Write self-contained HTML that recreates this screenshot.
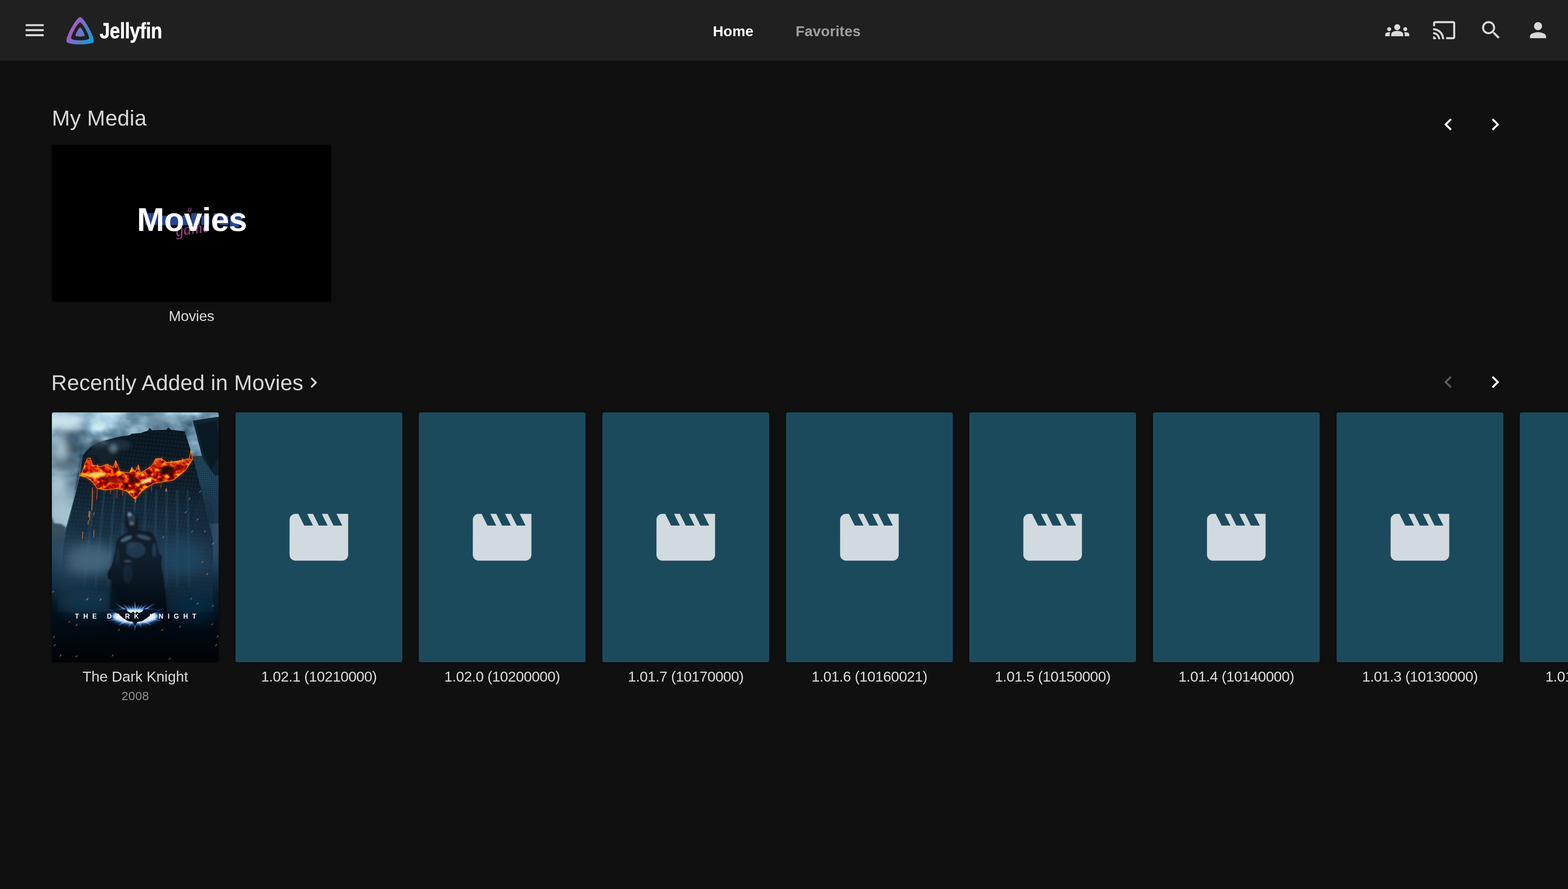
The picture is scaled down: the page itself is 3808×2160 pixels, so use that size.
<!DOCTYPE html>
<html lang="en">
<head>
<meta charset="utf-8">
<title>Jellyfin</title>
<style>
*{box-sizing:border-box}
html,body{margin:0;padding:0;width:3808px;height:2160px;overflow:hidden;background:#101010}
body{font-family:"Liberation Sans",sans-serif;color:#dcdcdc;position:relative}
main,.hc{opacity:.999}
.hc{position:absolute;left:0;top:0;width:3808px;height:147px;will-change:transform}
.abs{position:absolute;white-space:nowrap;line-height:1}
header{position:absolute;left:0;top:0;width:3808px;height:147px;background:#202020}
.ic{position:absolute;width:58.5px;height:58.5px;fill:#dadada}
.tab{font-weight:700;font-size:35.5px}
h2{margin:0;font-weight:400;font-size:52.6px;color:#d9d9d9;letter-spacing:.3px}
.card{position:absolute;top:1002px;width:405px;height:607px;border-radius:4.5px;background:#1d4b5e;overflow:hidden;box-shadow:0 0 6px rgba(0,0,0,.5)}
.card svg.mv{position:absolute;left:117.3px;top:217.5px;width:170.8px;height:170.8px;fill:#d2dbdf}
.ct{font-size:35.5px;color:#dcdcdc;text-align:center;width:405px;top:1626.8px;letter-spacing:-.3px}
.ct.num{letter-spacing:-.53px}
.ct.ttl{letter-spacing:0}
.ct.sec{font-size:29.5px;color:#919191;top:1676px;letter-spacing:.4px}
.nav{fill:#fff}
.nav.dis{fill:#5c5c5c}
.lib{position:absolute;width:678px;height:381px;background:#000;border-radius:4.5px;overflow:hidden;box-shadow:0 0 6px rgba(0,0,0,.5)}
.libbg{position:absolute;left:0;top:0}
.libt{position:absolute;left:0;top:0;width:100%;height:100%;display:flex;align-items:center;justify-content:center;font-weight:700;font-size:80.2px;color:#fff;letter-spacing:-.8px;padding-bottom:17.6px;padding-left:2px}
</style>
</head>
<body>
<header>
<div class="hc">
  <svg class="ic" style="left:55px;top:44px" viewBox="0 0 24 24"><path d="M3 18h18v-2H3v2zm0-5h18v-2H3v2zm0-7v2h18V6H3z"/></svg>
  <svg class="abs" style="left:158.1px;top:37.9px;width:73.2px;height:73.2px" viewBox="0 0 512 512"><defs><linearGradient id="jg" gradientUnits="userSpaceOnUse" x1="110.25" y1="213.3" x2="496.14" y2="436.09"><stop offset="0" stop-color="#aa5cc3"/><stop offset="1" stop-color="#00a4dc"/></linearGradient></defs><path d="M256 201.62c-20.44 0-86.23 119.29-76.2 139.43 10.01 20.1 142.48 19.88 152.4 0 9.92-19.88-55.75-139.42-76.2-139.43z" fill="url(#jg)"/><path d="M256 23.3c-61.56 0-259.82 359.43-229.59 420.13 30.23 60.7 429.34 60 459.24 0C515.55 382.73 317.62 23.3 256 23.3zm150.51 367.5c-19.59 39.33-281.08 39.77-300.9 0C85.8 351.03 215.69 115.48 256 115.48c40.31 0 170.1 235.94 150.51 275.32z" fill="url(#jg)"/></svg>
  <div class="abs" id="logo" style="left:242px;top:48.3px;font-size:53.5px;font-weight:700;color:#fff;letter-spacing:-0.5px;-webkit-text-stroke:0.7px #fff;transform:scaleX(0.84);transform-origin:0 0">Jellyfin</div>
  <div class="abs tab" id="t1" style="left:1731.2px;top:58.7px;color:#fff">Home</div>
  <div class="abs tab" id="t2" style="left:1932.3px;top:58.7px;color:#a0a0a0">Favorites</div>
  <svg class="ic" style="left:3364px;top:44px" viewBox="0 0 24 24"><path d="M12 12.75c1.63 0 3.07.39 4.24.9 1.08.48 1.76 1.56 1.76 2.73V18H6v-1.61c0-1.18.68-2.26 1.76-2.73 1.17-.52 2.61-.91 4.24-.91zM4 13c1.1 0 2-.9 2-2s-.9-2-2-2-2 .9-2 2 .9 2 2 2zm1.13 1.1c-.37-.06-.74-.1-1.13-.1-.99 0-1.93.21-2.78.58C.48 14.9 0 15.62 0 16.43V18h4.5v-1.61c0-.83.23-1.61.63-2.29zM20 13c1.1 0 2-.9 2-2s-.9-2-2-2-2 .9-2 2 .9 2 2 2zm4 3.43c0-.81-.48-1.53-1.22-1.85-.85-.37-1.79-.58-2.78-.58-.39 0-.76.04-1.13.1.4.68.63 1.46.63 2.29V18H24v-1.57zM12 6c1.66 0 3 1.34 3 3s-1.34 3-3 3-3-1.34-3-3 1.34-3 3-3z"/></svg>
  <svg class="ic" style="left:3478px;top:44px" viewBox="0 0 24 24"><path d="M21 3H3c-1.1 0-2 .9-2 2v3h2V5h18v14h-7v2h7c1.1 0 2-.9 2-2V5c0-1.1-.9-2-2-2zM1 18v3h3c0-1.66-1.34-3-3-3zm0-4v2c2.76 0 5 2.24 5 5h2c0-3.87-3.13-7-7-7zm0-4v2c4.97 0 9 4.03 9 9h2c0-6.08-4.93-11-11-11z"/></svg>
  <svg class="ic" style="left:3592px;top:44px" viewBox="0 0 24 24"><path d="M15.5 14h-.79l-.28-.27C15.41 12.59 16 11.11 16 9.5 16 5.91 13.09 3 9.5 3S3 5.91 3 9.5 5.91 16 9.5 16c1.61 0 3.09-.59 4.23-1.57l.27.28v.79l5 4.99L20.49 19l-4.99-5zm-6 0C7.01 14 5 11.99 5 9.5S7.01 5 9.5 5 14 7.01 14 9.5 11.99 14 9.5 14z"/></svg>
  <svg class="ic" style="left:3706px;top:44px" viewBox="0 0 24 24"><path d="M12 12c2.21 0 4-1.79 4-4s-1.79-4-4-4-4 1.79-4 4 1.79 4 4 4zm0 2c-2.67 0-8 1.34-8 4v2h16v-2c0-2.66-5.33-4-8-4z"/></svg>
</div>
</header>
<main>
  <h2 class="abs" id="h1" style="left:126px;top:261.2px">My Media</h2>
  <svg class="ic nav" style="left:3488px;top:273px" viewBox="0 0 24 24"><path d="M15.41 7.41L14 6l-6 6 6 6 1.41-1.41L10.83 12z"/></svg>
  <svg class="ic nav" style="left:3602px;top:273px" viewBox="0 0 24 24"><path d="M10 6L8.59 7.41 13.17 12l-4.58 4.59L10 18l6-6z"/></svg>
  <div class="lib" style="left:126px;top:352px">
    <svg class="libbg" viewBox="0 0 678 381" width="678" height="381" aria-hidden="true">
      <g fill="#2a4f9e" opacity=".92">
        <rect x="226" y="166" width="30" height="29" rx="3"/><rect x="259" y="172" width="24" height="23" rx="3"/><rect x="286" y="172" width="22" height="23" rx="3"/><rect x="311" y="172" width="24" height="23" rx="3"/><rect x="338" y="166" width="22" height="29" rx="3"/><rect x="363" y="172" width="20" height="23" rx="3"/>
        <rect x="392" y="166" width="12" height="29" rx="2"/><rect x="407" y="172" width="22" height="23" rx="3"/><rect x="432" y="172" width="22" height="29" rx="3"/><rect x="440" y="164" width="22" height="31" rx="3"/>
      </g>
      <text x="329" y="163" font-family="Liberation Serif, serif" font-style="italic" font-size="22" fill="#a3438f">a</text>
      <text x="302" y="222" font-family="Liberation Serif, serif" font-style="italic" font-size="38" fill="#a3438f" transform="rotate(-8 302 222)">game</text>
    </svg>
    <span class="libt">Movies</span>
  </div>
  <div class="abs ct" style="left:126px;top:751px;width:678px">Movies</div>

  <h2 class="abs" id="h2" style="left:124.6px;top:904.2px">Recently Added in Movies</h2>
  <svg class="abs" style="left:735.5px;top:904.1px;width:51.2px;height:51.2px;fill:#d9d9d9" viewBox="0 0 24 24"><path d="M10 6L8.59 7.41 13.17 12l-4.58 4.59L10 18l6-6z"/></svg>
  <svg class="ic nav dis" style="left:3488px;top:899.1px" viewBox="0 0 24 24"><path d="M15.41 7.41L14 6l-6 6 6 6 1.41-1.41L10.83 12z"/></svg>
  <svg class="ic nav" style="left:3602px;top:899.1px" viewBox="0 0 24 24"><path d="M10 6L8.59 7.41 13.17 12l-4.58 4.59L10 18l6-6z"/></svg>

  <div class="card" id="poster" style="left:126px;background:#0b1c2a"><!--P0--><svg viewBox="0 0 404.6 607" width="405" height="607" preserveAspectRatio="none" style="position:absolute;left:0;top:0;display:block">
<defs>
<linearGradient id="pk" x1="0" y1="0" x2="0" y2="1"><stop offset="0" stop-color="#9dbfce"/><stop offset=".2" stop-color="#86abbd"/><stop offset=".45" stop-color="#3d6077"/><stop offset=".62" stop-color="#1d4059"/><stop offset=".8" stop-color="#0b2236"/><stop offset="1" stop-color="#03080d"/></linearGradient>
<linearGradient id="pb" x1="0" y1="0" x2="0" y2="1"><stop offset="0" stop-color="#0a161f"/><stop offset=".28" stop-color="#0d1b26"/><stop offset=".45" stop-color="#14293a"/><stop offset=".6" stop-color="#193246"/><stop offset="1" stop-color="#1e3d54"/></linearGradient>
<linearGradient id="pd" x1="0" y1="0" x2="0" y2="1"><stop offset="0" stop-color="#020a12" stop-opacity="0"/><stop offset=".5" stop-color="#020a12" stop-opacity=".7"/><stop offset="1" stop-color="#020509" stop-opacity="1"/></linearGradient>
<radialGradient id="pg" cx=".5" cy=".5" r=".5"><stop offset="0" stop-color="#ffffff"/><stop offset=".35" stop-color="#a8d4ff"/><stop offset=".7" stop-color="#2f7fe0" stop-opacity=".7"/><stop offset="1" stop-color="#0a3a8a" stop-opacity="0"/></radialGradient>
<pattern id="pw" width="8.5" height="10" patternUnits="userSpaceOnUse" patternTransform="rotate(5) skewX(-6)"><rect x="1.5" y="2" width="4.6" height="5.4" fill="#3b5b70" opacity=".16"/></pattern>
<pattern id="pw2" width="5" height="5" patternUnits="userSpaceOnUse" patternTransform="rotate(4)"><rect x=".6" y=".6" width="3.2" height="3.2" fill="#0c2030" opacity=".55"/></pattern>
<filter id="b2" x="-20%" y="-20%" width="140%" height="140%"><feGaussianBlur stdDeviation="2"/></filter>
<filter id="b5" x="-30%" y="-30%" width="160%" height="160%"><feGaussianBlur stdDeviation="5"/></filter>
<filter id="b9" x="-40%" y="-40%" width="180%" height="180%"><feGaussianBlur stdDeviation="9"/></filter>
<filter id="b16" x="-60%" y="-60%" width="220%" height="220%"><feGaussianBlur stdDeviation="16"/></filter>
<filter id="b1" x="-10%" y="-10%" width="120%" height="120%"><feGaussianBlur stdDeviation=".7"/></filter>
<filter id="cl" x="0" y="0" width="100%" height="100%" color-interpolation-filters="sRGB"><feTurbulence type="fractalNoise" baseFrequency=".011 .016" numOctaves="5" seed="11"/><feColorMatrix type="matrix" values="0 0 0 2.2 -.62  0 0 0 2.2 -.47  0 0 0 2.2 -.37  0 0 0 0 1"/><feGaussianBlur stdDeviation="1.5"/></filter>
<filter id="fr" x="0" y="0" width="100%" height="100%" color-interpolation-filters="sRGB"><feTurbulence type="fractalNoise" baseFrequency=".07 .09" numOctaves="3" seed="5"/><feColorMatrix type="matrix" values="0 0 0 2.4 -.42  0 0 0 2.6 -1.22  0 0 0 .5 -.3  0 0 0 0 1"/><feGaussianBlur stdDeviation=".5"/></filter>
<filter id="sm" x="0" y="0" width="100%" height="100%"><feTurbulence type="fractalNoise" baseFrequency=".03 .04" numOctaves="4" seed="8"/><feColorMatrix type="matrix" values="0 0 0 0 .08  0 0 0 0 .13  0 0 0 0 .18  3.2 0 0 0 -1.05"/><feGaussianBlur stdDeviation="1.2"/></filter>
<linearGradient id="pl" x1="0" y1="0" x2="0" y2="1"><stop offset="0" stop-color="#9fbecb" stop-opacity="0"/><stop offset=".5" stop-color="#9fbecb" stop-opacity=".55"/><stop offset="1" stop-color="#a6c5d1" stop-opacity=".95"/></linearGradient>
<linearGradient id="pm" x1="0" y1="0" x2="0" y2="1"><stop offset="0" stop-color="#121c26"/><stop offset=".35" stop-color="#13202d"/><stop offset=".7" stop-color="#0a1622"/><stop offset="1" stop-color="#050d16"/></linearGradient>
<clipPath id="cb"><polygon points="67.3,154.3 75.1,141.6 80.0,126.0 85.8,112.4 92.6,110.5 98.5,128.0 117.9,131.9 133.5,126.0 149.1,133.8 154.9,117.3 164.7,143.6 188.1,147.5 193.9,133.8 201.7,145.5 209.5,128.0 215.3,147.5 242.6,129.9 252.3,112.4 266.0,112.4 277.7,122.1 304.9,118.2 334.1,112.4 337.1,91.0 341.0,114.3 324.4,139.7 308.8,153.3 293.2,165.0 277.7,166.9 246.5,172.8 232.9,180.6 217.3,192.3 201.7,210.8 180.3,190.3 158.8,184.5 129.6,188.4 110.1,184.5 98.5,168.9 82.9,157.2"/></clipPath>
<clipPath id="cs"><polygon points="-6.7,-2.5 421.8,-2.5 421.8,114.3 343.9,114.3 334.1,83.2 322.5,46.2 232.9,44.2 168.6,57.9 94.6,83.2 75.1,104.6 57.6,198.1 32.2,289.6 -6.7,309.1"/></clipPath>
<clipPath id="ck"><polygon points="57.6,172.8 67.3,102.7 82.9,87.1 110.1,61.8 168.6,52.0 217.3,59.8 227.0,94.9 217.3,129.9 168.6,145.5 121.8,139.7 94.6,129.9"/></clipPath>
</defs>
<rect width="404.6" height="607" fill="url(#pk)"/>
<g clip-path="url(#cs)"><rect width="404.6" height="330" filter="url(#cl)" opacity=".7"/></g>
<g filter="url(#b9)">
<ellipse cx="32.2" cy="22.8" rx="44.8" ry="21.4" fill="#cfe6ee" opacity="0.95"/>
<ellipse cx="22.5" cy="98.8" rx="17.5" ry="23.4" fill="#c3dde7" opacity="0.8"/>
<ellipse cx="129.6" cy="15.0" rx="58.4" ry="13.6" fill="#b0d2e2" opacity="0.6"/>
<ellipse cx="266.0" cy="17.0" rx="62.3" ry="17.5" fill="#9cc0d2" opacity="0.55"/>
<ellipse cx="18.6" cy="69.5" rx="21.4" ry="21.4" fill="#b2d3e2" opacity="0.7"/>
<ellipse cx="16.7" cy="174.7" rx="21.4" ry="23.4" fill="#bdd9e4" opacity="0.85"/>
<ellipse cx="20.5" cy="231.2" rx="23.4" ry="25.3" fill="#b3d2de" opacity="0.85"/>
<ellipse cx="32.2" cy="126.0" rx="33.1" ry="17.5" fill="#2a4050" opacity="0.8"/>
<ellipse cx="75.1" cy="83.2" rx="33.1" ry="15.6" fill="#34505f" opacity="0.7"/>
<ellipse cx="55.6" cy="52.0" rx="31.2" ry="9.7" fill="#4a6878" opacity="0.55"/>
<ellipse cx="207.5" cy="36.4" rx="58.4" ry="9.7" fill="#7fa0af" opacity="0.5"/>
</g>
<polygon points="341.9,106.6 412.1,104.6 412.1,270.2 375.0,270.2" fill="#244a60"/>
<polygon points="341.9,106.6 412.1,104.6 412.1,270.2 375.0,270.2" fill="url(#pw2)"/>
<polygon points="341.9,19.9 401.3,11.1 414.0,12.1 414.0,153.3 394.5,153.3 365.3,110.5" fill="#102530"/>
<polygon points="349.7,28.6 398.4,21.8 414.0,94.9 386.7,137.7 369.2,102.7" fill="#0a1a24" opacity=".85"/>
<polygon points="75.1,104.6 82.9,94.9 94.6,83.2 121.8,69.5 168.6,57.9 190.0,54.9 192.0,52.0 215.3,50.1 232.9,44.2 236.8,37.4 242.6,43.3 277.7,42.3 282.5,36.4 289.3,42.3 322.5,46.2 334.1,83.2 343.9,114.3 363.4,192.3 378.9,258.1 390.6,309.1 390.6,484.4 12.8,484.4 32.2,289.6 40.0,258.1 57.6,198.1 67.3,153.3" fill="url(#pb)"/>
<polygon points="75.1,104.6 82.9,94.9 94.6,83.2 121.8,69.5 168.6,57.9 190.0,54.9 192.0,52.0 215.3,50.1 232.9,44.2 236.8,37.4 242.6,43.3 277.7,42.3 282.5,36.4 289.3,42.3 322.5,46.2 334.1,83.2 343.9,114.3 363.4,192.3 378.9,258.1 390.6,309.1 390.6,484.4 12.8,484.4 32.2,289.6 40.0,258.1 57.6,198.1 67.3,153.3" fill="url(#pw)"/>
<polygon points="98.5,188.4 104.5,188.4 81.7,426.0 73.7,426.0" fill="#31566e" opacity=".32"/>
<polygon points="123.8,188.4 129.8,188.4 110.0,426.0 102.0,426.0" fill="#31566e" opacity=".32"/>
<polygon points="149.1,188.4 155.1,188.4 138.4,426.0 130.4,426.0" fill="#31566e" opacity=".32"/>
<polygon points="174.4,188.4 180.4,188.4 166.8,426.0 158.8,426.0" fill="#31566e" opacity=".32"/>
<polygon points="199.7,188.4 205.7,188.4 195.1,426.0 187.1,426.0" fill="#31566e" opacity=".32"/>
<polygon points="225.1,188.4 231.1,188.4 223.5,426.0 215.5,426.0" fill="#31566e" opacity=".32"/>
<polygon points="250.4,188.4 256.4,188.4 251.8,426.0 243.8,426.0" fill="#31566e" opacity=".32"/>
<polygon points="275.7,188.4 281.7,188.4 280.2,426.0 272.2,426.0" fill="#31566e" opacity=".32"/>
<polygon points="301.0,188.4 307.0,188.4 308.6,426.0 300.6,426.0" fill="#31566e" opacity=".32"/>
<polygon points="326.4,188.4 332.4,188.4 336.9,426.0 328.9,426.0" fill="#31566e" opacity=".32"/>
<g filter="url(#b5)">
<ellipse cx="121.8" cy="102.7" rx="37.0" ry="21.4" fill="#16222e" opacity="0.92"/>
<ellipse cx="94.6" cy="118.2" rx="21.4" ry="15.6" fill="#0f1a25" opacity="0.92"/>
<ellipse cx="158.8" cy="79.3" rx="33.1" ry="13.6" fill="#223544" opacity="0.85"/>
<ellipse cx="110.1" cy="75.4" rx="17.5" ry="9.7" fill="#2c4252" opacity="0.8"/>
<ellipse cx="149.1" cy="87.1" rx="8.8" ry="9.7" fill="#8aa5b1" opacity="0.6"/>
<ellipse cx="125.7" cy="69.5" rx="7.8" ry="5.8" fill="#7f9aa7" opacity="0.5"/>
</g>
<polygon points="67.3,154.3 75.1,141.6 80.0,126.0 85.8,112.4 92.6,110.5 98.5,128.0 117.9,131.9 133.5,126.0 149.1,133.8 154.9,117.3 164.7,143.6 188.1,147.5 193.9,133.8 201.7,145.5 209.5,128.0 215.3,147.5 242.6,129.9 252.3,112.4 266.0,112.4 277.7,122.1 304.9,118.2 334.1,112.4 337.1,91.0 341.0,114.3 324.4,139.7 308.8,153.3 293.2,165.0 277.7,166.9 246.5,172.8 232.9,180.6 217.3,192.3 201.7,210.8 180.3,190.3 158.8,184.5 129.6,188.4 110.1,184.5 98.5,168.9 82.9,157.2" fill="#ff4a0c" opacity=".5" filter="url(#b5)"/>
<polygon points="67.3,154.3 75.1,141.6 80.0,126.0 85.8,112.4 92.6,110.5 98.5,128.0 117.9,131.9 133.5,126.0 149.1,133.8 154.9,117.3 164.7,143.6 188.1,147.5 193.9,133.8 201.7,145.5 209.5,128.0 215.3,147.5 242.6,129.9 252.3,112.4 266.0,112.4 277.7,122.1 304.9,118.2 334.1,112.4 337.1,91.0 341.0,114.3 324.4,139.7 308.8,153.3 293.2,165.0 277.7,166.9 246.5,172.8 232.9,180.6 217.3,192.3 201.7,210.8 180.3,190.3 158.8,184.5 129.6,188.4 110.1,184.5 98.5,168.9 82.9,157.2" fill="#d8401a"/>
<g clip-path="url(#cb)"><rect x="50" y="70" width="320" height="160" filter="url(#fr)"/>
<g filter="url(#b2)">
<ellipse cx="279.6" cy="139.7" rx="17.5" ry="9.3" fill="#1a0806" opacity="0.9" transform="rotate(-12 279.6 139.7)"/>
<ellipse cx="197.8" cy="163.0" rx="8.8" ry="8.8" fill="#2a0a06" opacity="0.85"/>
<ellipse cx="154.9" cy="165.0" rx="23.4" ry="8.8" fill="#9a180a" opacity="0.7"/>
<ellipse cx="314.7" cy="133.8" rx="15.6" ry="7.8" fill="#8a1408" opacity="0.6"/>
<ellipse cx="108.2" cy="151.4" rx="23.4" ry="7.0" fill="#ffd95a" opacity="0.95" transform="rotate(-6 108.2 151.4)"/>
<ellipse cx="229.0" cy="166.0" rx="16.6" ry="5.1" fill="#ffe98a" opacity="0.95" transform="rotate(-25 229.0 166.0)"/>
<ellipse cx="304.9" cy="120.2" rx="25.3" ry="2.7" fill="#ff9a28" opacity="0.9" transform="rotate(-8 304.9 120.2)"/>
<ellipse cx="90.7" cy="126.0" rx="6.2" ry="11.7" fill="#ff3a14" opacity="0.85"/>
<ellipse cx="256.2" cy="124.1" rx="11.7" ry="7.8" fill="#e83a14" opacity="0.8"/>
</g></g>
<polyline points="67.3,154.3 75.1,141.6 80.0,126.0 85.8,112.4 92.6,110.5 98.5,128.0 117.9,131.9 133.5,126.0 149.1,133.8 154.9,117.3 164.7,143.6 188.1,147.5 193.9,133.8 201.7,145.5 209.5,128.0 215.3,147.5 242.6,129.9 252.3,112.4 266.0,112.4 277.7,122.1 304.9,118.2 334.1,112.4 337.1,91.0 341.0,114.3 324.4,139.7 308.8,153.3 293.2,165.0 277.7,166.9 246.5,172.8 232.9,180.6 217.3,192.3 201.7,210.8 180.3,190.3 158.8,184.5 129.6,188.4 110.1,184.5 98.5,168.9 82.9,157.2 67.3,154.3" fill="none" stroke="#ff9a2a" stroke-width="1.6" opacity=".85" stroke-linejoin="round"/>
<polygon points="152.7,133.8 155.7,115.3 157.1,133.8" fill="#ff8a22" opacity=".9"/>
<polygon points="207.3,139.7 210.3,125.1 211.7,139.7" fill="#ff8a22" opacity=".9"/>
<polygon points="133.3,133.8 136.3,123.1 137.7,133.8" fill="#ff8a22" opacity=".9"/>
<polygon points="263.8,118.2 266.8,107.5 268.2,118.2" fill="#ff8a22" opacity=".9"/>
<polygon points="314.4,118.2 317.4,110.5 318.8,118.2" fill="#ff8a22" opacity=".9"/>
<polygon points="248.2,126.0 251.2,117.3 252.6,126.0" fill="#ff8a22" opacity=".9"/>
<polygon points="191.7,141.6 194.7,130.9 196.1,141.6" fill="#ff8a22" opacity=".9"/>
<polygon points="287.1,122.1 290.1,115.3 291.5,122.1" fill="#ff8a22" opacity=".9"/>
<polygon points="107.9,131.9 110.9,124.1 112.3,131.9" fill="#ff8a22" opacity=".9"/>
<line x1="98.5" y1="182.5" x2="96.9" y2="237.1" stroke="#ff6a1a" stroke-width="2" opacity=".85"/>
<line x1="90.7" y1="239.0" x2="89.1" y2="254.6" stroke="#ff8a2a" stroke-width="2" opacity=".85"/>
<line x1="110.1" y1="184.5" x2="108.6" y2="211.7" stroke="#e8441a" stroke-width="2" opacity=".85"/>
<line x1="158.8" y1="184.5" x2="157.3" y2="207.8" stroke="#c8381a" stroke-width="2" opacity=".85"/>
<line x1="172.5" y1="188.4" x2="170.9" y2="202.0" stroke="#d84a1a" stroke-width="2" opacity=".85"/>
<line x1="203.6" y1="209.8" x2="202.1" y2="219.5" stroke="#ff7a22" stroke-width="2" opacity=".85"/>
<line x1="242.6" y1="174.7" x2="241.0" y2="192.3" stroke="#c8381a" stroke-width="2" opacity=".85"/>
<line x1="266.0" y1="168.9" x2="264.4" y2="184.5" stroke="#b8301a" stroke-width="2" opacity=".85"/>
<line x1="143.3" y1="186.4" x2="141.7" y2="198.1" stroke="#d8401a" stroke-width="2" opacity=".85"/>
<line x1="277.7" y1="184.5" x2="276.1" y2="192.3" stroke="#ff9a3a" stroke-width="2" opacity=".85"/>
<line x1="92.6" y1="240.9" x2="91.4" y2="262.3" stroke="#ff8a30" stroke-width="1.5" opacity=".85"/>
<line x1="102.4" y1="242.8" x2="101.2" y2="250.6" stroke="#ff8a30" stroke-width="1.5" opacity=".85"/>
<line x1="75.1" y1="289.5" x2="73.9" y2="307.1" stroke="#ff8a30" stroke-width="1.5" opacity=".85"/>
<line x1="102.4" y1="285.7" x2="101.2" y2="303.2" stroke="#ff8a30" stroke-width="1.5" opacity=".85"/>
<line x1="88.7" y1="262.3" x2="87.6" y2="272.0" stroke="#ff8a30" stroke-width="1.5" opacity=".85"/>
<g filter="url(#b16)">
<ellipse cx="94.6" cy="357.7" rx="64.3" ry="40.9" fill="#4b6d83" opacity="0.85"/>
<ellipse cx="314.7" cy="353.8" rx="58.4" ry="44.8" fill="#1f4a66" opacity="0.75"/>
<ellipse cx="32.2" cy="422.0" rx="50.6" ry="31.2" fill="#1f4560" opacity="0.75"/>
<ellipse cx="207.5" cy="324.6" rx="54.5" ry="35.1" fill="#35586f" opacity="0.5"/>
<ellipse cx="373.1" cy="256.4" rx="29.2" ry="58.4" fill="#0e2a3c" opacity="0.6"/>
<ellipse cx="22.5" cy="307.1" rx="25.3" ry="21.4" fill="#24404f" opacity="0.7"/>
</g>
<polygon points="-2.8,61.7 71.2,61.7 63.4,139.6 57.6,184.4 51.7,209.7 41.0,256.4 34.2,277.9 22.5,272.0 5.0,270.1 -0.9,252.5" fill="url(#pl)" filter="url(#b2)"/>
<polygon points="-2.8,254.5 5.0,270.1 22.5,271.0 34.2,279.8 32.2,307.1 -2.8,307.1" fill="#34505f" opacity=".95" filter="url(#b2)"/>
<polygon points="181.8,241.8 185.1,251.6 190.0,248.3 194.9,249.0 197.8,239.9 202.1,249.6 207.5,260.3 208.9,275.9 206.6,285.7 217.3,288.0 234.8,289.9 246.5,297.3 252.7,311.0 256.6,330.5 260.5,346.0 266.0,348.4 264.4,373.3 268.3,392.8 272.2,416.2 276.1,451.2 278.0,478.1 279.6,529.1 137.4,529.1 139.4,478.1 141.3,451.2 145.2,422.0 146.2,408.4 137.8,404.5 134.7,392.8 139.4,383.0 145.2,373.3 149.1,357.7 154.9,334.3 156.9,314.9 160.8,307.1 168.6,301.2 184.2,291.9 183.4,283.7 179.5,272.0 178.3,256.4" fill="#050d16" opacity=".5" filter="url(#b5)"/>
<polygon points="181.8,241.8 185.1,251.6 190.0,248.3 194.9,249.0 197.8,239.9 202.1,249.6 207.5,260.3 208.9,275.9 206.6,285.7 217.3,288.0 234.8,289.9 246.5,297.3 252.7,311.0 256.6,330.5 260.5,346.0 266.0,348.4 264.4,373.3 268.3,392.8 272.2,416.2 276.1,451.2 278.0,478.1 279.6,529.1 137.4,529.1 139.4,478.1 141.3,451.2 145.2,422.0 146.2,408.4 137.8,404.5 134.7,392.8 139.4,383.0 145.2,373.3 149.1,357.7 154.9,334.3 156.9,314.9 160.8,307.1 168.6,301.2 184.2,291.9 183.4,283.7 179.5,272.0 178.3,256.4" fill="url(#pm)"/>
<g filter="url(#b2)">
<ellipse cx="180.3" cy="307.1" rx="15.6" ry="5.1" fill="#4d6d88" opacity="0.9" transform="rotate(-25 180.3 307.1)"/>
<ellipse cx="223.1" cy="303.2" rx="17.5" ry="5.1" fill="#3c5a76" opacity="0.85" transform="rotate(15 223.1 303.2)"/>
<ellipse cx="203.6" cy="334.3" rx="23.4" ry="19.5" fill="#263c54" opacity="0.9"/>
<ellipse cx="192.0" cy="322.7" rx="11.7" ry="7.8" fill="#2c4660" opacity="0.6"/>
<ellipse cx="248.4" cy="334.3" rx="5.5" ry="17.5" fill="#2a4660" opacity="0.7"/>
<ellipse cx="192.9" cy="256.4" rx="9.7" ry="11.7" fill="#2c4258" opacity="0.85"/>
<ellipse cx="188.1" cy="247.7" rx="5.1" ry="5.1" fill="#8aa6ba" opacity="0.8"/>
<ellipse cx="193.9" cy="270.1" rx="6.2" ry="4.3" fill="#8a8078" opacity="0.75"/>
<ellipse cx="184.2" cy="361.6" rx="9.7" ry="2.7" fill="#5a6a78" opacity="0.7"/>
<ellipse cx="184.2" cy="392.8" rx="11.7" ry="23.4" fill="#152a40" opacity="0.8"/>
<ellipse cx="158.8" cy="349.9" rx="4.9" ry="21.4" fill="#1a2f45" opacity="0.7"/>
</g>
<rect x="0" y="380" width="404.6" height="227" fill="url(#pd)"/>
<g filter="url(#b16)">
<ellipse cx="82.9" cy="462.3" rx="64.3" ry="33.1" fill="#12405e" opacity="0.6"/>
<ellipse cx="343.9" cy="472.0" rx="50.6" ry="39.0" fill="#0c3350" opacity="0.5"/>
</g>
<ellipse cx="201.7" cy="495.4" rx="74" ry="27" fill="url(#pg)" filter="url(#b2)"/>
<polygon points="204.9,495.4 201.7,457.4 198.5,495.4" fill="#8cc4ff" opacity=".75"/>
<polygon points="204.5,497.0 219.7,465.8 198.9,493.8" fill="#8cc4ff" opacity=".75"/>
<polygon points="204.5,493.8 184.7,467.4 198.9,497.0" fill="#8cc4ff" opacity=".75"/>
<polygon points="203.5,498.0 250.8,462.7 199.9,492.8" fill="#8cc4ff" opacity=".75"/>
<polygon points="203.5,492.8 154.2,463.8 199.9,498.0" fill="#8cc4ff" opacity=".75"/>
<polygon points="202.5,498.5 269.3,478.2 200.9,492.3" fill="#8cc4ff" opacity=".75"/>
<polygon points="202.5,492.3 134.1,478.2 200.9,498.5" fill="#8cc4ff" opacity=".75"/>
<polygon points="201.1,498.5 268.7,506.6 202.2,492.2" fill="#8cc4ff" opacity=".75"/>
<polygon points="201.1,492.2 134.7,506.6 202.2,498.5" fill="#8cc4ff" opacity=".75"/>
<polygon points="200.1,498.2 243.3,518.2 203.3,492.6" fill="#8cc4ff" opacity=".75"/>
<polygon points="200.1,492.6 158.4,519.1 203.3,498.2" fill="#8cc4ff" opacity=".75"/>
<polygon points="198.9,497.0 218.7,523.4 204.5,493.8" fill="#8cc4ff" opacity=".75"/>
<polygon points="198.9,493.8 184.7,523.4 204.5,497.0" fill="#8cc4ff" opacity=".75"/>
<polygon points="198.5,495.4 201.7,531.5 204.9,495.4" fill="#8cc4ff" opacity=".75"/>
<polygon points="204.8,496.2 209.5,467.9 198.6,494.6" fill="#8cc4ff" opacity=".75"/>
<polygon points="204.8,494.6 193.9,467.9 198.6,496.2" fill="#8cc4ff" opacity=".75"/>
<polygon points="204.1,497.5 231.1,464.3 199.3,493.2" fill="#8cc4ff" opacity=".75"/>
<polygon points="204.1,493.2 172.3,464.3 199.3,497.5" fill="#8cc4ff" opacity=".75"/>
<ellipse cx="201.7" cy="495.4" rx="54" ry="17" fill="#e4f2ff" opacity=".9" filter="url(#b2)"/>
<polygon points="145.2,481.8 180.3,477.9 184.2,483.7 192.0,487.6 197.8,483.7 199.7,487.6 203.6,487.6 205.6,483.7 211.4,487.6 219.2,483.7 223.1,477.9 260.1,481.8 242.6,489.5 230.9,499.3 219.2,507.1 207.5,509.0 201.7,518.8 195.8,509.0 184.2,507.1 172.5,499.3 160.8,489.5" fill="#06111c"/>
<line x1="268.3" y1="305.0" x2="271.5" y2="301.4" stroke="#f0a060" stroke-width="1.2" stroke-linecap="round" opacity=".9"/>
<line x1="322.8" y1="244.6" x2="326.0" y2="241.0" stroke="#f0a060" stroke-width="1.2" stroke-linecap="round" opacity=".9"/>
<line x1="352.0" y1="262.1" x2="355.2" y2="258.5" stroke="#f0a060" stroke-width="1.2" stroke-linecap="round" opacity=".9"/>
<line x1="389.0" y1="320.6" x2="392.2" y2="317.0" stroke="#f0a060" stroke-width="1.2" stroke-linecap="round" opacity=".9"/>
<line x1="375.4" y1="394.6" x2="378.6" y2="391.0" stroke="#f0a060" stroke-width="1.2" stroke-linecap="round" opacity=".9"/>
<line x1="363.7" y1="365.4" x2="366.9" y2="361.8" stroke="#f0a060" stroke-width="1.2" stroke-linecap="round" opacity=".9"/>
<line x1="338.4" y1="291.3" x2="341.6" y2="287.7" stroke="#f0a060" stroke-width="1.2" stroke-linecap="round" opacity=".9"/>
<line x1="369.6" y1="291.3" x2="372.8" y2="287.7" stroke="#f0a060" stroke-width="1.2" stroke-linecap="round" opacity=".9"/>
<line x1="85.2" y1="455.0" x2="88.4" y2="451.4" stroke="#f0a060" stroke-width="1.2" stroke-linecap="round" opacity=".9"/>
<line x1="116.3" y1="456.9" x2="119.5" y2="453.3" stroke="#f0a060" stroke-width="1.2" stroke-linecap="round" opacity=".9"/>
<line x1="1.4" y1="437.4" x2="4.6" y2="433.8" stroke="#f0a060" stroke-width="1.2" stroke-linecap="round" opacity=".9"/>
<line x1="83.2" y1="456.3" x2="86.4" y2="452.7" stroke="#f0a060" stroke-width="1.2" stroke-linecap="round" opacity=".9"/>
<line x1="116.3" y1="456.3" x2="119.5" y2="452.7" stroke="#f0a060" stroke-width="1.2" stroke-linecap="round" opacity=".9"/>
<line x1="57.9" y1="518.6" x2="61.1" y2="515.0" stroke="#f0a060" stroke-width="1.2" stroke-linecap="round" opacity=".9"/>
<line x1="40.4" y1="510.8" x2="43.6" y2="507.2" stroke="#f0a060" stroke-width="1.2" stroke-linecap="round" opacity=".9"/>
<line x1="5.3" y1="567.3" x2="8.5" y2="563.7" stroke="#f0a060" stroke-width="1.2" stroke-linecap="round" opacity=".9"/>
<line x1="3.4" y1="547.8" x2="6.6" y2="544.2" stroke="#f0a060" stroke-width="1.2" stroke-linecap="round" opacity=".9"/>
<line x1="18.9" y1="592.6" x2="22.1" y2="589.0" stroke="#f0a060" stroke-width="1.2" stroke-linecap="round" opacity=".9"/>
<line x1="57.9" y1="594.6" x2="61.1" y2="591.0" stroke="#f0a060" stroke-width="1.2" stroke-linecap="round" opacity=".9"/>
<line x1="145.6" y1="592.6" x2="148.8" y2="589.0" stroke="#f0a060" stroke-width="1.2" stroke-linecap="round" opacity=".9"/>
<line x1="161.1" y1="530.3" x2="164.3" y2="526.7" stroke="#f0a060" stroke-width="1.2" stroke-linecap="round" opacity=".9"/>
<line x1="266.3" y1="530.3" x2="269.5" y2="526.7" stroke="#f0a060" stroke-width="1.2" stroke-linecap="round" opacity=".9"/>
<line x1="309.2" y1="522.5" x2="312.4" y2="518.9" stroke="#f0a060" stroke-width="1.2" stroke-linecap="round" opacity=".9"/>
<line x1="387.1" y1="516.7" x2="390.3" y2="513.1" stroke="#f0a060" stroke-width="1.2" stroke-linecap="round" opacity=".9"/>
<line x1="400.7" y1="545.9" x2="403.9" y2="542.3" stroke="#f0a060" stroke-width="1.2" stroke-linecap="round" opacity=".9"/>
<line x1="396.8" y1="567.3" x2="400.0" y2="563.7" stroke="#f0a060" stroke-width="1.2" stroke-linecap="round" opacity=".9"/>
<line x1="336.4" y1="454.3" x2="339.6" y2="450.7" stroke="#f0a060" stroke-width="1.2" stroke-linecap="round" opacity=".9"/>
<line x1="352.0" y1="466.0" x2="355.2" y2="462.4" stroke="#f0a060" stroke-width="1.2" stroke-linecap="round" opacity=".9"/>
<line x1="283.8" y1="600.4" x2="287.0" y2="596.8" stroke="#f0a060" stroke-width="1.2" stroke-linecap="round" opacity=".9"/>
<line x1="389.0" y1="471.9" x2="392.2" y2="468.3" stroke="#f0a060" stroke-width="1.2" stroke-linecap="round" opacity=".9"/>
<line x1="276.1" y1="192.1" x2="279.3" y2="188.5" stroke="#f0a060" stroke-width="1.2" stroke-linecap="round" opacity=".9"/>
<line x1="357.9" y1="194.1" x2="361.1" y2="190.5" stroke="#f0a060" stroke-width="1.2" stroke-linecap="round" opacity=".9"/>
<line x1="332.5" y1="211.6" x2="335.7" y2="208.0" stroke="#f0a060" stroke-width="1.2" stroke-linecap="round" opacity=".9"/>
<text y="501.4" font-family="Liberation Sans, sans-serif" font-weight="700" font-size="16" fill="#fff" letter-spacing="10.4"><tspan x="56">THE</tspan> <tspan x="133.6">DARK</tspan> <tspan x="237">KNIGHT</tspan></text>
</svg><!--P1--></div>
  <div class="abs ct ttl" style="left:126px">The Dark Knight</div>
  <div class="abs ct sec" style="left:126px">2008</div>
  <div class="card ph" style="left:572px"><svg class="mv" viewBox="0 0 24 24"><path d="M18 4l2 4h-3l-2-4h-2l2 4h-3l-2-4H8l2 4H7L5 4H4c-1.1 0-1.99.9-1.99 2L2 18c0 1.1.9 2 2 2h16c1.1 0 2-.9 2-2V4h-4z"/></svg></div>
  <div class="abs ct num" style="left:572px">1.02.1 (10210000)</div>
  <div class="card ph" style="left:1017px"><svg class="mv" viewBox="0 0 24 24"><path d="M18 4l2 4h-3l-2-4h-2l2 4h-3l-2-4H8l2 4H7L5 4H4c-1.1 0-1.99.9-1.99 2L2 18c0 1.1.9 2 2 2h16c1.1 0 2-.9 2-2V4h-4z"/></svg></div>
  <div class="abs ct num" style="left:1017px">1.02.0 (10200000)</div>
  <div class="card ph" style="left:1463px"><svg class="mv" viewBox="0 0 24 24"><path d="M18 4l2 4h-3l-2-4h-2l2 4h-3l-2-4H8l2 4H7L5 4H4c-1.1 0-1.99.9-1.99 2L2 18c0 1.1.9 2 2 2h16c1.1 0 2-.9 2-2V4h-4z"/></svg></div>
  <div class="abs ct num" style="left:1463px">1.01.7 (10170000)</div>
  <div class="card ph" style="left:1909px"><svg class="mv" viewBox="0 0 24 24"><path d="M18 4l2 4h-3l-2-4h-2l2 4h-3l-2-4H8l2 4H7L5 4H4c-1.1 0-1.99.9-1.99 2L2 18c0 1.1.9 2 2 2h16c1.1 0 2-.9 2-2V4h-4z"/></svg></div>
  <div class="abs ct num" style="left:1909px">1.01.6 (10160021)</div>
  <div class="card ph" style="left:2354px"><svg class="mv" viewBox="0 0 24 24"><path d="M18 4l2 4h-3l-2-4h-2l2 4h-3l-2-4H8l2 4H7L5 4H4c-1.1 0-1.99.9-1.99 2L2 18c0 1.1.9 2 2 2h16c1.1 0 2-.9 2-2V4h-4z"/></svg></div>
  <div class="abs ct num" style="left:2354px">1.01.5 (10150000)</div>
  <div class="card ph" style="left:2800px"><svg class="mv" viewBox="0 0 24 24"><path d="M18 4l2 4h-3l-2-4h-2l2 4h-3l-2-4H8l2 4H7L5 4H4c-1.1 0-1.99.9-1.99 2L2 18c0 1.1.9 2 2 2h16c1.1 0 2-.9 2-2V4h-4z"/></svg></div>
  <div class="abs ct num" style="left:2800px">1.01.4 (10140000)</div>
  <div class="card ph" style="left:3246px"><svg class="mv" viewBox="0 0 24 24"><path d="M18 4l2 4h-3l-2-4h-2l2 4h-3l-2-4H8l2 4H7L5 4H4c-1.1 0-1.99.9-1.99 2L2 18c0 1.1.9 2 2 2h16c1.1 0 2-.9 2-2V4h-4z"/></svg></div>
  <div class="abs ct num" style="left:3246px">1.01.3 (10130000)</div>
  <div class="card ph" style="left:3691px"><svg class="mv" viewBox="0 0 24 24"><path d="M18 4l2 4h-3l-2-4h-2l2 4h-3l-2-4H8l2 4H7L5 4H4c-1.1 0-1.99.9-1.99 2L2 18c0 1.1.9 2 2 2h16c1.1 0 2-.9 2-2V4h-4z"/></svg></div>
  <div class="abs ct num" style="left:3691px">1.01.2 (10120000)</div>
</main>
</body>
</html>
